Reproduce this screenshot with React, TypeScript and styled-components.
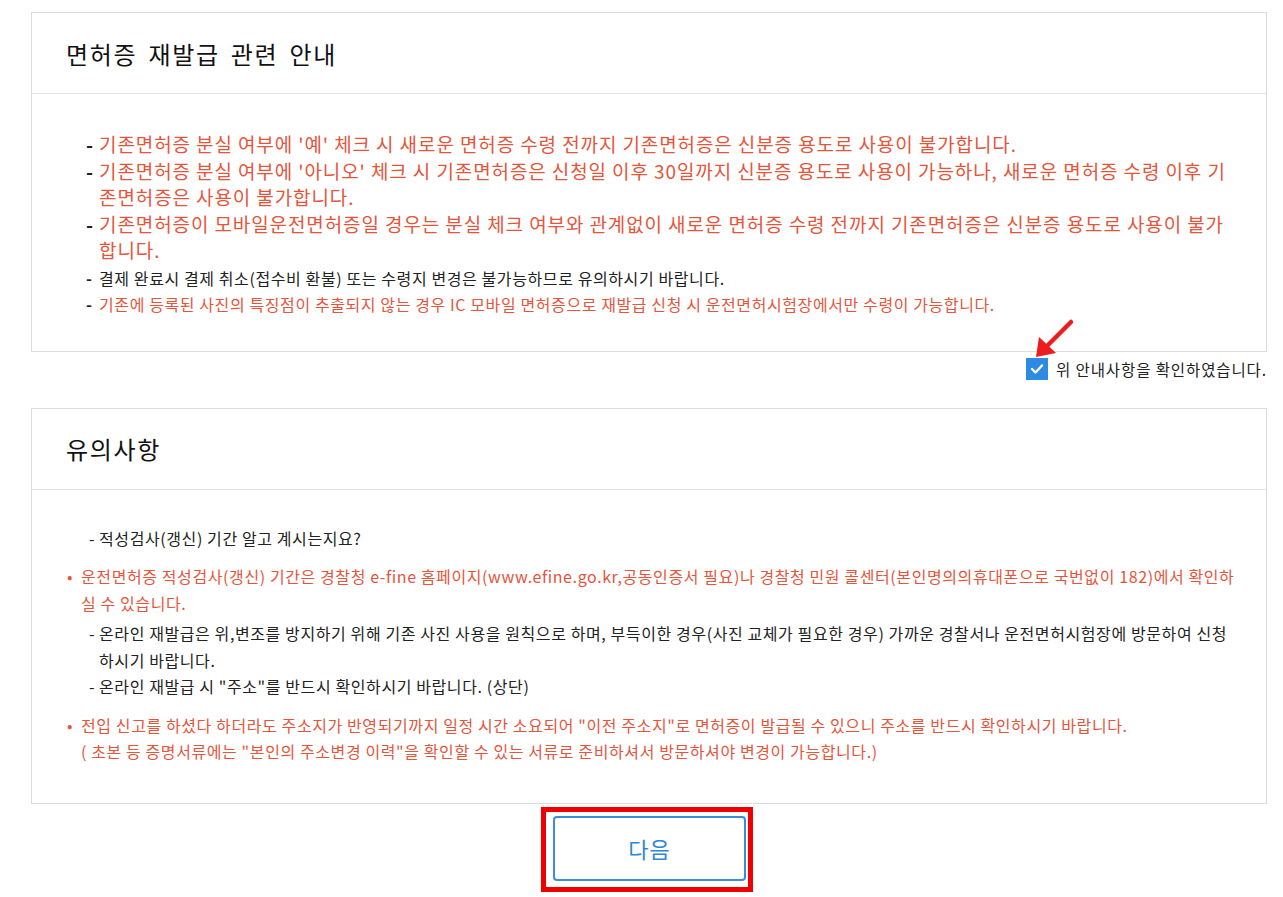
import React from 'react';
import styled, { createGlobalStyle } from 'styled-components';

const RED = '#e5553c';
const INK = '#222';

const GlobalStyle = createGlobalStyle`
  html, body {
    margin: 0;
    padding: 0;
    background: #fff;
  }
  body {
    font-family: "Noto Sans CJK KR", "Noto Sans", sans-serif;
    color: ${INK};
  }
`;

const Page = styled.div`
  padding: 12px 16px 0 31px;
  display: flex;
  flex-direction: column;
`;

const Panel = styled.section`
  border: 1px solid #dcdcdc;
  background: #fff;
`;

const PanelHeader = styled.header`
  height: 80px;
  padding: 0 34px;
  display: flex;
  align-items: center;
  border-bottom: 1px solid #e3e3e3;
`;

const Title = styled.h2`
  margin: 0;
  font-size: 24px;
  font-weight: 400;
  color: #111;
  letter-spacing: 1.7px;
  word-spacing: 4px;
`;

const PanelBody = styled.div<{ $pad: string }>`
  padding: ${({ $pad }) => $pad};
`;

const List = styled.ul`
  list-style: none;
  margin: 0;
  padding: 0;
`;

const Item = styled.li<{ $large?: boolean; $red?: boolean; $gap?: number }>`
  display: flex;
  font-size: ${({ $large }) => ($large ? 19 : 16)}px;
  letter-spacing: ${({ $large }) => ($large ? 0.9 : 0.6)}px;
  line-height: 26.5px;
  color: ${({ $red }) => ($red ? RED : INK)};
  margin-top: ${({ $gap }) => $gap ?? 0}px;
`;

const Marker = styled.span<{ $w: number; $red?: boolean; $bold?: boolean }>`
  flex: 0 0 ${({ $w }) => $w}px;
  color: ${({ $red }) => ($red ? RED : INK)};
  font-weight: ${({ $bold }) => ($bold ? 700 : 400)};
  letter-spacing: 0;
`;

const Text = styled.span`
  flex: 1;
  min-width: 0;
`;

const ConfirmRow = styled.div`
  position: relative;
  display: flex;
  justify-content: flex-end;
  align-items: center;
  gap: 8px;
  margin: 6px 0 28px;
  font-size: 15.5px;
  letter-spacing: 0.9px;
  color: ${INK};
`;

const CheckBox = styled.span`
  width: 22px;
  height: 22px;
  background: #2f8ae6;
  display: flex;
  align-items: center;
  justify-content: center;
`;

const Arrow = styled.svg`
  position: absolute;
  right: 192px;
  top: -40px;
`;

const ButtonArea = styled.div`
  display: flex;
  justify-content: center;
  margin-top: 3px;
`;

const Highlight = styled.div`
  border: 5px solid #f00000;
  padding: 4px 2px 6px 7px;
  margin-right: 4px;
`;

const NextButton = styled.button`
  width: 193px;
  height: 65px;
  border: 2px solid #3b8ddb;
  border-radius: 4px;
  background: #fff;
  color: #2f86d9;
  font-family: "Noto Sans CJK KR", sans-serif;
  font-size: 22px;
  letter-spacing: 1px;
  cursor: pointer;
`;

const notices: { text: string; large: boolean; red: boolean }[] = [
  { text: "기존면허증 분실 여부에 '예' 체크 시 새로운 면허증 수령 전까지 기존면허증은 신분증 용도로 사용이 불가합니다.", large: true, red: true },
  { text: "기존면허증 분실 여부에 '아니오' 체크 시 기존면허증은 신청일 이후 30일까지 신분증 용도로 사용이 가능하나, 새로운 면허증 수령 이후 기존면허증은 사용이 불가합니다.", large: true, red: true },
  { text: "기존면허증이 모바일운전면허증일 경우는 분실 체크 여부와 관계없이 새로운 면허증 수령 전까지 기존면허증은 신분증 용도로 사용이 불가합니다.", large: true, red: true },
  { text: "결제 완료시 결제 취소(접수비 환불) 또는 수령지 변경은 불가능하므로 유의하시기 바랍니다.", large: false, red: false },
  { text: "기존에 등록된 사진의 특징점이 추출되지 않는 경우 IC 모바일 면허증으로 재발급 신청 시 운전면허시험장에서만 수령이 가능합니다.", large: false, red: true },
];

export default function App() {
  return (
    <>
      <GlobalStyle />
      <Page>
        <Panel>
          <PanelHeader>
            <Title>면허증 재발급 관련 안내</Title>
          </PanelHeader>
          <PanelBody $pad="37px 33px 33px 54px">
            <List>
              {notices.map((n, i) => (
                <Item key={i} $large={n.large} $red={n.red} $gap={i === 3 ? 1 : 0}>
                  <Marker $w={13} $bold>-</Marker>
                  <Text>{n.text}</Text>
                </Item>
              ))}
            </List>
          </PanelBody>
        </Panel>

        <ConfirmRow>
          <Arrow width="46" height="44" viewBox="0 0 46 44">
            <line x1="42" y1="4" x2="18" y2="28" stroke="#ee1c1c" strokeWidth="4.5" strokeLinecap="round" />
            <polygon points="7,39 10,19 27,35" fill="#ee1c1c" />
          </Arrow>
          <CheckBox>
            <svg width="14" height="12" viewBox="0 0 14 12">
              <polyline points="2,6 5.5,9.5 12,2.5" fill="none" stroke="#fff" strokeWidth="2.4" strokeLinecap="round" strokeLinejoin="round" />
            </svg>
          </CheckBox>
          <span>위 안내사항을 확인하였습니다.</span>
        </ConfirmRow>

        <Panel>
          <PanelHeader>
            <Title>유의사항</Title>
          </PanelHeader>
          <PanelBody $pad="35px 30px 38px 35px">
            <List>
              <Item>
                <Marker $w={22} />
                <Marker $w={10}>-</Marker>
                <Text>적성검사(갱신) 기간 알고 계시는지요?</Text>
              </Item>
              <Item $red $gap={12}>
                <Marker $w={14} $red>•</Marker>
                <Text>운전면허증 적성검사(갱신) 기간은 경찰청 e-fine 홈페이지(www.efine.go.kr,공동인증서 필요)나 경찰청 민원 콜센터(본인명의의휴대폰으로 국번없이 182)에서 확인하실 수 있습니다.</Text>
              </Item>
              <Item $gap={4}>
                <Marker $w={22} />
                <Marker $w={10}>-</Marker>
                <Text>온라인 재발급은 위,변조를 방지하기 위해 기존 사진 사용을 원칙으로 하며, 부득이한 경우(사진 교체가 필요한 경우) 가까운 경찰서나 운전면허시험장에 방문하여 신청하시기 바랍니다.</Text>
              </Item>
              <Item>
                <Marker $w={22} />
                <Marker $w={10}>-</Marker>
                <Text>온라인 재발급 시 "주소"를 반드시 확인하시기 바랍니다. (상단)</Text>
              </Item>
              <Item $red $gap={12}>
                <Marker $w={14} $red>•</Marker>
                <Text>
                  전입 신고를 하셨다 하더라도 주소지가 반영되기까지 일정 시간 소요되어 "이전 주소지"로 면허증이 발급될 수 있으니 주소를 반드시 확인하시기 바랍니다.
                  <br />( 초본 등 증명서류에는 "본인의 주소변경 이력"을 확인할 수 있는 서류로 준비하셔서 방문하셔야 변경이 가능합니다.)
                </Text>
              </Item>
            </List>
          </PanelBody>
        </Panel>

        <ButtonArea>
          <Highlight>
            <NextButton type="button">다음</NextButton>
          </Highlight>
        </ButtonArea>
      </Page>
    </>
  );
}
